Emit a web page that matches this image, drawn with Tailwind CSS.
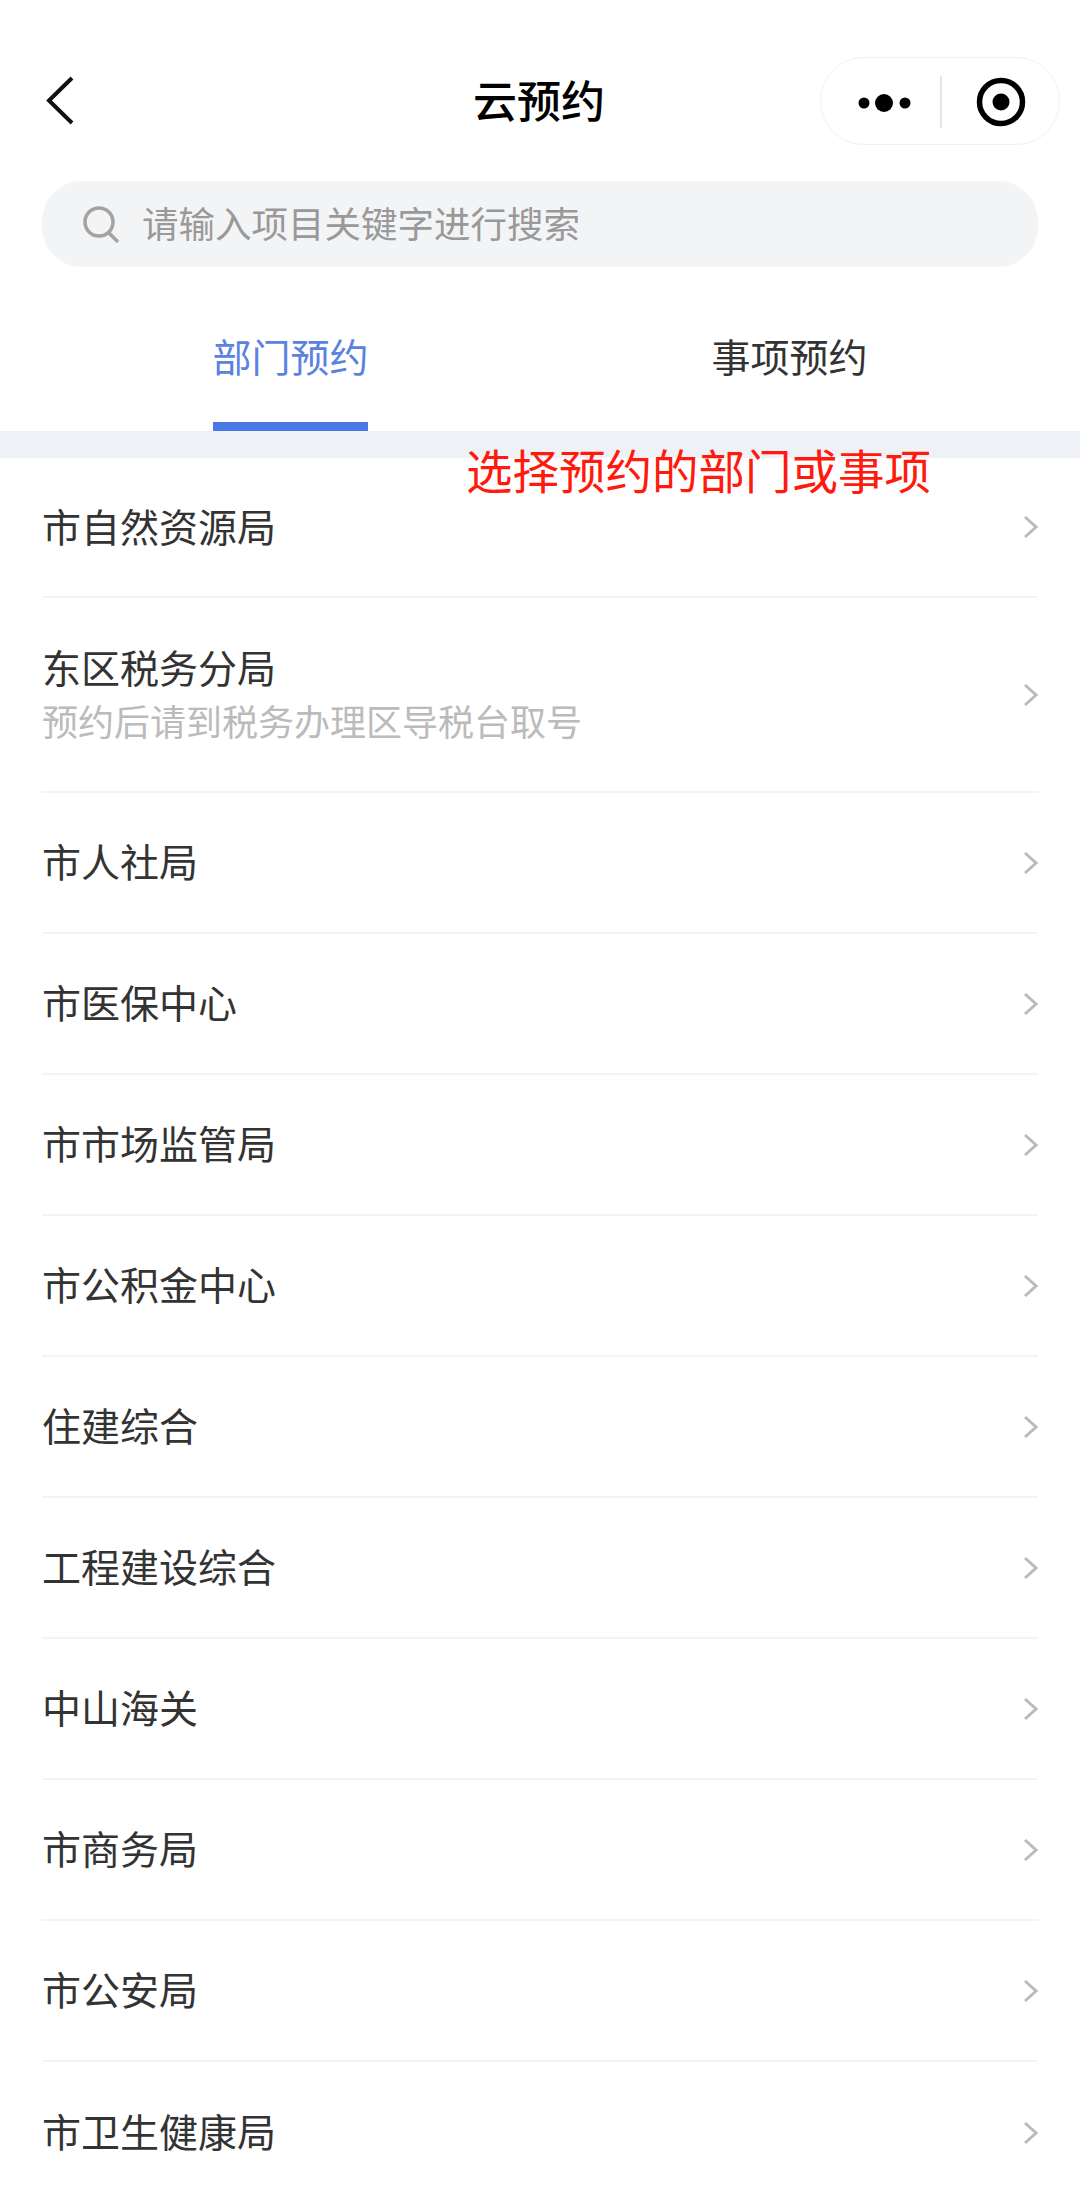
<!DOCTYPE html>
<html lang="zh-CN">
<head>
  <meta charset="UTF-8" />
  <meta name="viewport" content="width=device-width, initial-scale=1.0"/>
  <title>云预约</title>
  <script src="https://cdn.jsdelivr.net/npm/@tailwindcss/browser@4"></script>
</head>
<body class="bg-white font-['Noto_Sans_CJK_SC','Noto_Sans',sans-serif]">
  <div class="relative w-[1080px] h-[2203px] overflow-hidden">
    <!-- Nav bar -->
    <header class="grid grid-cols-[1fr_auto_1fr] items-center h-[88px] mt-[57px] pl-[18px] pr-[20px]">
      <svg class="ml-[28px] w-[30px] h-[50px]" viewBox="0 0 30 50" fill="none" stroke="#111" stroke-width="4">
        <path d="M26 2 L3 24.500 L26 47"/>
      </svg>
      <h1 class="mb-[4px] text-[44px] leading-none font-medium text-black">云预约</h1>
      <div class="justify-self-end flex items-center w-[240px] h-[88px] rounded-full border-[1.5px] border-[#f1f1f1]">
        <svg class="w-[238px] h-[85px]" viewBox="820 58 238 85">
          <circle cx="863" cy="102" r="5.500" fill="#000"/>
          <circle cx="883" cy="102" r="9" fill="#000"/>
          <circle cx="904" cy="102" r="5.500" fill="#000"/>
          <path d="M940 75 V127" stroke="#ddd" stroke-width="1.500"/>
          <circle cx="1000" cy="101" r="21.500" fill="none" stroke="#000" stroke-width="5.500"/>
          <circle cx="1000" cy="101" r="8.500" fill="#000"/>
        </svg>
      </div>
    </header>

    <!-- Search -->
    <div class="flex items-center h-[86px] mx-[42px] mt-[36px] pl-[41px] rounded-[40px] bg-[#f3f4f6]">
      <svg class="w-[36px] h-[37px]" viewBox="0 0 36 37" fill="none" stroke="#a3a3a3" stroke-width="3.500">
        <circle cx="16" cy="16" r="14"/>
        <path d="M26 27 L35 36"/>
      </svg>
      <span class="ml-[23px] mb-[2px] text-[36.5px] leading-none text-[#999]">请输入项目关键字进行搜索</span>
    </div>

    <!-- Tabs -->
    <nav class="flex justify-between h-[164px] pl-[213px] pr-[213px]">
      <a class="flex flex-col justify-end items-center w-[155px] whitespace-nowrap border-b-[9px] border-[#4a78e6] pb-[47px] text-[39px] leading-none text-[#5a82e0]">部门预约</a>
      <a class="flex flex-col justify-end items-center w-[155px] whitespace-nowrap pb-[56px] text-[39px] leading-none text-[#333]">事项预约</a>
    </nav>
    <div class="h-[27px] bg-[#eef2f6]"></div>

    <!-- Overlay note -->
    <p class="absolute left-[466px] top-[443px] text-[46.5px] leading-[52px] text-[#ff1a0d]">选择预约的部门或事项</p>

    <!-- List -->
    <ul class="px-[42px] text-[39px] leading-none text-[#333]">
      <li class="flex items-center justify-between h-[140px] border-b-2 border-[#f4f4f4]">
        <span class="mb-[4px]">市自然资源局</span>
        <svg class="w-[16px] h-[24px]" viewBox="0 0 16 24" fill="none" stroke="#bbb" stroke-width="3"><path d="M3 2 L14 12 L3 22"/></svg>
      </li>
      <li class="flex items-center justify-between h-[195px] border-b-2 border-[#f4f4f4]">
        <div class="mb-[5px]">
          <div class="mb-[16px]">东区税务分局</div>
          <div class="text-[36px] text-[#bbb]">预约后请到税务办理区导税台取号</div>
        </div>
        <svg class="w-[16px] h-[24px]" viewBox="0 0 16 24" fill="none" stroke="#bbb" stroke-width="3"><path d="M3 2 L14 12 L3 22"/></svg>
      </li>
      <li class="flex items-center justify-between h-[141px] border-b-2 border-[#f4f4f4]">
        <span class="mb-[4px]">市人社局</span>
        <svg class="w-[16px] h-[24px]" viewBox="0 0 16 24" fill="none" stroke="#bbb" stroke-width="3"><path d="M3 2 L14 12 L3 22"/></svg>
      </li>
      <li class="flex items-center justify-between h-[141px] border-b-2 border-[#f4f4f4]">
        <span class="mb-[4px]">市医保中心</span>
        <svg class="w-[16px] h-[24px]" viewBox="0 0 16 24" fill="none" stroke="#bbb" stroke-width="3"><path d="M3 2 L14 12 L3 22"/></svg>
      </li>
      <li class="flex items-center justify-between h-[141px] border-b-2 border-[#f4f4f4]">
        <span class="mb-[4px]">市市场监管局</span>
        <svg class="w-[16px] h-[24px]" viewBox="0 0 16 24" fill="none" stroke="#bbb" stroke-width="3"><path d="M3 2 L14 12 L3 22"/></svg>
      </li>
      <li class="flex items-center justify-between h-[141px] border-b-2 border-[#f4f4f4]">
        <span class="mb-[4px]">市公积金中心</span>
        <svg class="w-[16px] h-[24px]" viewBox="0 0 16 24" fill="none" stroke="#bbb" stroke-width="3"><path d="M3 2 L14 12 L3 22"/></svg>
      </li>
      <li class="flex items-center justify-between h-[141px] border-b-2 border-[#f4f4f4]">
        <span class="mb-[4px]">住建综合</span>
        <svg class="w-[16px] h-[24px]" viewBox="0 0 16 24" fill="none" stroke="#bbb" stroke-width="3"><path d="M3 2 L14 12 L3 22"/></svg>
      </li>
      <li class="flex items-center justify-between h-[141px] border-b-2 border-[#f4f4f4]">
        <span class="mb-[4px]">工程建设综合</span>
        <svg class="w-[16px] h-[24px]" viewBox="0 0 16 24" fill="none" stroke="#bbb" stroke-width="3"><path d="M3 2 L14 12 L3 22"/></svg>
      </li>
      <li class="flex items-center justify-between h-[141px] border-b-2 border-[#f4f4f4]">
        <span class="mb-[4px]">中山海关</span>
        <svg class="w-[16px] h-[24px]" viewBox="0 0 16 24" fill="none" stroke="#bbb" stroke-width="3"><path d="M3 2 L14 12 L3 22"/></svg>
      </li>
      <li class="flex items-center justify-between h-[141px] border-b-2 border-[#f4f4f4]">
        <span class="mb-[4px]">市商务局</span>
        <svg class="w-[16px] h-[24px]" viewBox="0 0 16 24" fill="none" stroke="#bbb" stroke-width="3"><path d="M3 2 L14 12 L3 22"/></svg>
      </li>
      <li class="flex items-center justify-between h-[141px] border-b-2 border-[#f4f4f4]">
        <span class="mb-[4px]">市公安局</span>
        <svg class="w-[16px] h-[24px]" viewBox="0 0 16 24" fill="none" stroke="#bbb" stroke-width="3"><path d="M3 2 L14 12 L3 22"/></svg>
      </li>
      <li class="flex items-center justify-between h-[141px]">
        <span class="mb-[4px]">市卫生健康局</span>
        <svg class="w-[16px] h-[24px]" viewBox="0 0 16 24" fill="none" stroke="#bbb" stroke-width="3"><path d="M3 2 L14 12 L3 22"/></svg>
      </li>
    </ul>
  </div>
</body>
</html>
